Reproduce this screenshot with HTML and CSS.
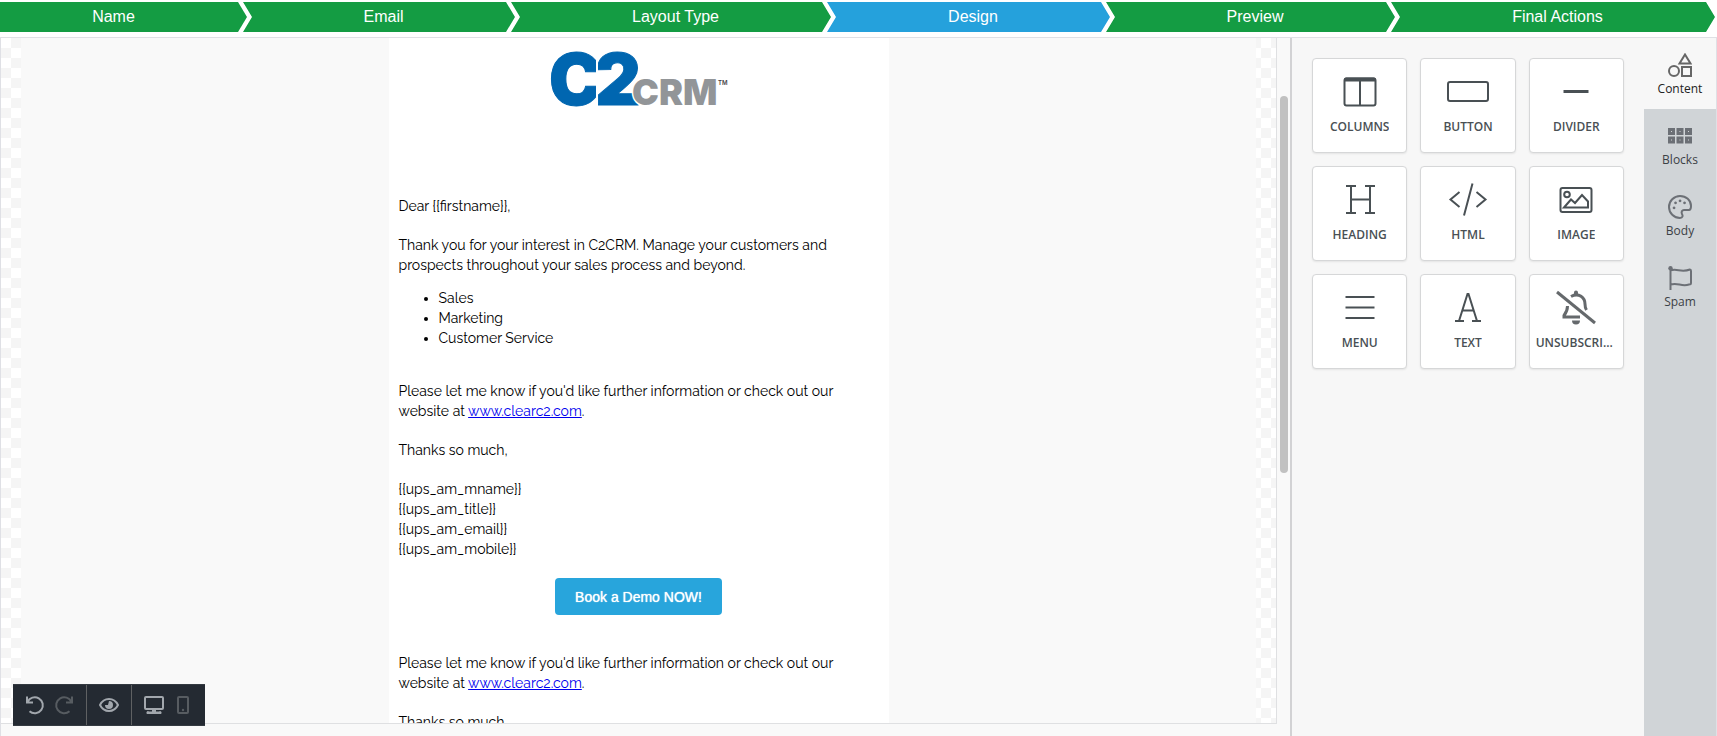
FILE: index.html
```html
<!DOCTYPE html>
<html lang="en">
<head>
<meta charset="utf-8">
<title>Email Designer</title>
<link rel="stylesheet" href="styles.css">
</head>
<body>
<nav class="steps" aria-label="Campaign steps">
  <a class="step step-first" href="#name">Name</a>
  <a class="step" href="#email">Email</a>
  <a class="step" href="#layout">Layout Type</a>
  <a class="step step-current" href="#design" aria-current="step">Design</a>
  <a class="step" href="#preview">Preview</a>
  <a class="step step-final" href="#final">Final Actions</a>
</nav>
<div class="editor">
  <main class="workspace">
    <div class="canvas">
      <div class="page">
        <article class="email">
          <svg class="logo" width="190" height="68" viewBox="0 0 190 68" role="img" aria-label="C2CRM">
            <defs>
              <clipPath id="leftHalf"><rect x="0" y="0" width="52" height="68"/></clipPath>
              <clipPath id="rightHalf"><rect x="54" y="0" width="60" height="68"/></clipPath>
            </defs>
            <g clip-path="url(#leftHalf)"><text class="logo-big" x="5" y="60">C</text></g>
            <g clip-path="url(#rightHalf)"><text class="logo-big" x="51" y="60">2</text></g>
            <text class="logo-small" x="88" y="60">CRM</text>
            <text class="logo-tm" x="174" y="40">TM</text>
          </svg>
          <p>Dear {{firstname}},</p>
          <p>Thank you for your interest in C2CRM. Manage your customers and prospects throughout your sales process and beyond.</p>
          <ul>
            <li>Sales</li>
            <li>Marketing</li>
            <li>Customer Service</li>
          </ul>
          <p>Please let me know if you'd like further information or check out our website at <a href="#site">www.clearc2.com</a>.</p>
          <p>Thanks so much,</p>
          <p>{{ups_am_mname}}<br>{{ups_am_title}}<br>{{ups_am_email}}<br>{{ups_am_mobile}}</p>
          <button class="cta" type="button">Book a Demo NOW!</button>
          <p>Please let me know if you'd like further information or check out our website at <a href="#site">www.clearc2.com</a>.</p>
          <p>Thanks so much,</p>
        </article>
      </div>
    </div>
    <div class="scroll"><div class="thumb"></div></div>
    <div class="toolbar">
      <div class="group">
        <button type="button" aria-label="Undo"><svg width="20" height="20" viewBox="0 0 20 20"><path d="M2 1.500V7.500H8M2.500 7A8 8 0 1 1 4.500 16.200"/></svg></button>
        <button type="button" aria-label="Redo" class="dim"><svg width="20" height="20" viewBox="0 0 20 20"><path d="M18 1.500V7.500H12M17.500 7A8 8 0 1 0 15.500 16.200"/></svg></button>
      </div>
      <div class="group">
        <button type="button" aria-label="Preview"><svg width="20" height="20" viewBox="0 0 20 20"><path d="M1 10C3 6 6.500 4 10 4S17 6 19 10C17 14 13.500 16 10 16S3 14 1 10Z"/><path class="solid" d="M10 6A4 4 0 1 1 6 10L9 10Z"/></svg></button>
      </div>
      <div class="group">
        <button type="button" aria-label="Desktop"><svg width="20" height="20" viewBox="0 0 20 20"><rect x="1" y="2" width="18" height="12" rx="1"/><path class="solid" d="M8 14.500H12V16.500H15A1 1 0 0 1 17 19H3A1 1 0 0 1 5 16.500H8Z"/></svg></button>
        <button type="button" aria-label="Mobile" class="dim"><svg width="20" height="20" viewBox="0 0 20 20"><rect x="5" y="2" width="10" height="16" rx="1"/><circle class="solid" cx="10" cy="15" r="1.200"/></svg></button>
      </div>
    </div>
  </main>
  <aside class="panel">
    <div class="tiles">
      <button type="button" class="tile"><svg width="42" height="36" viewBox="0 0 42 36"><rect x="5.500" y="4.500" width="31" height="27" rx="2"/><path d="M21 5V31"/><path class="solid" d="M5 7V5.500A2 2 0 0 1 7 3.500H35A2 2 0 0 1 37 5.500V7.500H5Z"/></svg><span>COLUMNS</span></button>
      <button type="button" class="tile"><svg width="42" height="36" viewBox="0 0 42 36"><rect x="1" y="8" width="40" height="19" rx="2"/></svg><span>BUTTON</span></button>
      <button type="button" class="tile"><svg width="42" height="36" viewBox="0 0 42 36"><path class="thick" d="M8.500 17.500H33.500"/></svg><span>DIVIDER</span></button>
      <button type="button" class="tile"><svg width="42" height="36" viewBox="0 0 42 36"><path d="M7 4H17M26 4H36M7 31H17M26 31H36M12 4V31M31 4V31M12 17.500H31"/></svg><span>HEADING</span></button>
      <button type="button" class="tile"><svg width="42" height="36" viewBox="0 0 42 36"><path d="M12.500 10L3.500 17.500L12.500 25M29.500 10L38.500 17.500L29.500 25M25.500 1.500L17 33.500"/></svg><span>HTML</span></button>
      <button type="button" class="tile"><svg width="42" height="36" viewBox="0 0 42 36"><rect x="5.500" y="6" width="31" height="24" rx="2"/><circle cx="12" cy="12.500" r="2.800"/><path d="M9 25.500L16 17.500L20 21L27 13L33 19.500V25.500Z"/></svg><span>IMAGE</span></button>
      <button type="button" class="tile"><svg width="42" height="36" viewBox="0 0 42 36"><path d="M6.500 7H35.500M6.500 17.500H35.500M6.500 28H35.500"/></svg><span>MENU</span></button>
      <button type="button" class="tile"><svg width="42" height="36" viewBox="0 0 42 36"><path d="M8 31H17M25 31H34M12 31L20.500 4H21.500L30 31M15.500 20.500H26.500"/></svg><span>TEXT</span></button>
      <button type="button" class="tile"><svg class="bell" width="42" height="36" viewBox="0 0 42 36"><path d="M2 2L40 33"/><path d="M16 6.500C24 2 30 8 30 14C30 17 30.500 18.500 31.500 20M12.500 16C12.500 21 11 23 9 25.500V27H25"/><path class="solid" d="M19 4V2.500A2 2 0 0 1 23 2.500V4ZM17 30.500H25A4 4 0 0 1 17 30.500Z"/></svg><span>UNSUBSCRIBE</span></button>
    </div>
    <div class="tabs">
      <button type="button" class="tab active"><svg width="24" height="24" viewBox="0 0 24 24"><path d="M17 1.500L22.500 10.500H11.500Z"/><circle cx="6" cy="18" r="5"/><rect x="14" y="14" width="9" height="9"/></svg><span>Content</span></button>
      <button type="button" class="tab"><svg width="24" height="24" viewBox="0 0 24 24"><path class="blocks" d="M1.500 5.500H5.500V9.500H1.500ZM10 5.500H14V9.500H10ZM18.500 5.500H22.500V9.500H18.500ZM1.500 14H5.500V18H1.500ZM10 14H14V18H10ZM18.500 14H22.500V18H18.500Z"/></svg><span>Blocks</span></button>
      <button type="button" class="tab"><svg width="24" height="24" viewBox="0 0 24 24"><path d="M23 11C23 5 18 1 12 1A11 11 0 0 0 1 12C1 18 6 23 12 23C15 23 15 20.500 14 19C13 17 14 15 16 15H21C22.500 15 23 13 23 11Z"/><path class="solid" d="M6 11.500a1.400 1.400 0 1 0 .1 0ZM7.500 6.500a1.400 1.400 0 1 0 .1 0ZM12 4.500a1.400 1.400 0 1 0 .1 0ZM16.500 6.500a1.400 1.400 0 1 0 .1 0Z"/></svg><span>Body</span></button>
      <button type="button" class="tab"><svg width="24" height="24" viewBox="0 0 24 24"><path d="M2.500 2V24M2.500 4.500C9 2 13 7 22 3.500C23 3.500 23 4 23 5V17C23 18 22 18.500 21 18.500C13 21 10 16 2.500 18.500"/><circle class="solid" cx="2.500" cy="2.300" r="2.200"/></svg><span>Spam</span></button>
    </div>
  </aside>
</div>
</body>
</html>
```
FILE: styles.css
```css
* { box-sizing: border-box; }
body {
  margin: 0;
  height: 100vh;
  display: flex;
  flex-direction: column;
  overflow: hidden;
  background: #fff;
  font-family: "Liberation Sans", Arial, sans-serif;
}
button { font: inherit; cursor: pointer; }
svg { flex: none; fill: none; stroke: currentColor; stroke-width: 2; }
.solid { fill: currentColor; stroke: none; }

.steps {
  flex: none;
  display: grid;
  grid-template-columns: 243fr 268fr 316fr 279fr 285fr 324fr;
  padding: 2px 2px 5px 0;
}
.step {
  height: 30px;
  margin-right: -4px;
  padding-left: 9px;
  background: #149c43;
  color: #fff;
  font-size: 16px;
  line-height: 30px;
  text-align: center;
  text-decoration: none;
  clip-path: polygon(0 0, calc(100% - 9px) 0, 100% 50%, calc(100% - 9px) 100%, 0 100%, 9px 50%);
}
.step-first {
  padding: 0 20px 0 0;
  clip-path: polygon(0 0, calc(100% - 9px) 0, 100% 50%, calc(100% - 9px) 100%, 0 100%);
}
.step-current { background: #25a1dc; }
.step-final { margin-right: 0; }

.editor {
  flex: 1;
  min-height: 0;
  display: flex;
  border: 1px solid #dfe0e5;
  border-width: 1px 1px 0 1px;
  background: #f9f9f9;
}
.workspace {
  flex: 1;
  min-width: 0;
  position: relative;
  display: flex;
  padding-bottom: 12px;
}
.canvas {
  flex: 1;
  min-width: 0;
  overflow: hidden;
  padding: 0 20px;
  border: 1px solid #dfe0e2;
  border-width: 0 1px 1px 0;
  background: conic-gradient(#f5f5f5 25%, #fff 0 50%, #f5f5f5 0 75%, #fff 0) 0 0 / 20px 20px;
}
.page { background: #f9f9f9; }
.email {
  max-width: 500px;
  margin: 0 auto;
  padding: 7px 10px;
  background: #fff;
  color: #000;
  font-family: Raleway, Lato, sans-serif;
  font-size: 14px;
  line-height: 20px;
}
.email p { margin: 0 0 19px; }
.email ul { margin: -6px 0 33px; padding-left: 40px; }
.email a { color: #0000ee; }
.logo { display: block; margin: 0 auto 83px; }
.logo text { stroke: none; font-family: Inter, sans-serif; font-weight: 900; }
.logo .logo-big { font-size: 71px; fill: #0066b0; stroke: #0066b0; stroke-width: 1px; }
.logo .logo-small { font-size: 36px; fill: #929598; stroke: #fff; stroke-width: 3px; paint-order: stroke; }
.logo .logo-tm { font-size: 6px; fill: #444; font-weight: 600; }
.cta {
  display: block;
  margin: 19px auto 38px;
  padding: 0 20px;
  height: 37px;
  border: 0;
  border-radius: 4px;
  background: #28a5dc;
  color: #fff;
  font-family: "Liberation Sans", Arial, sans-serif;
  font-size: 14px;
  text-shadow: 0 0 1px #fff;
}

.scroll { flex: none; width: 13px; padding: 58px 2px 0 3px; }
.thumb { height: 60%; border-radius: 4px; background: #c1c1c1; }

.toolbar {
  position: absolute;
  left: 12px;
  bottom: 10px;
  display: flex;
  border: 1px solid #343a41;
  border-width: 1px 0;
  background: #242a32;
}
.group { display: flex; gap: 9px; padding: 10px 12px; }
.group + .group { border-left: 1px solid #5f6163; }
.group button { display: flex; padding: 0; border: 0; background: none; color: #a2a7ad; height: 20px; }
.group .dim { color: #575c61; }

.panel {
  flex: none;
  display: flex;
  width: 426px;
  border-left: 2px solid #d2d2d4;
  background: #f7f7f7;
}
.tiles {
  flex: 1;
  display: grid;
  grid-template-columns: repeat(3, minmax(0, 1fr));
  align-content: start;
  gap: 13px;
  padding: 20px;
}
.tile {
  display: flex;
  flex-direction: column;
  align-items: center;
  height: 95px;
  padding: 15px 6px 0;
  gap: 8px;
  border: 1px solid #d6d7d8;
  border-radius: 4px;
  background: #fff;
  box-shadow: 0 1px 2px rgba(0, 0, 0, 0.08);
  color: #495054;
  font-family: "Open Sans", sans-serif;
  font-size: 12px;
  font-weight: 600;
  line-height: 18px;
}
.tile span { max-width: 100%; overflow: hidden; text-overflow: ellipsis; white-space: nowrap; }
.tile .thick { stroke-width: 3; }
.tile .bell { stroke-width: 3; color: #65696c; }
.tabs { flex: none; width: 72px; background: #d0d4d7; }
.tab {
  display: flex;
  flex-direction: column;
  align-items: center;
  gap: 3px;
  width: 100%;
  height: 71px;
  padding: 15px 0 0;
  border: 0;
  background: none;
  color: #6c7076;
  font-family: "Open Sans", sans-serif;
  font-size: 12px;
  line-height: 18px;
}
.tab .blocks { stroke-width: 3; }
.tab span { color: #3c4146; }
.tab.active { background: #f7f7f7; color: #666; }
.tab.active span { color: #222; }
```
